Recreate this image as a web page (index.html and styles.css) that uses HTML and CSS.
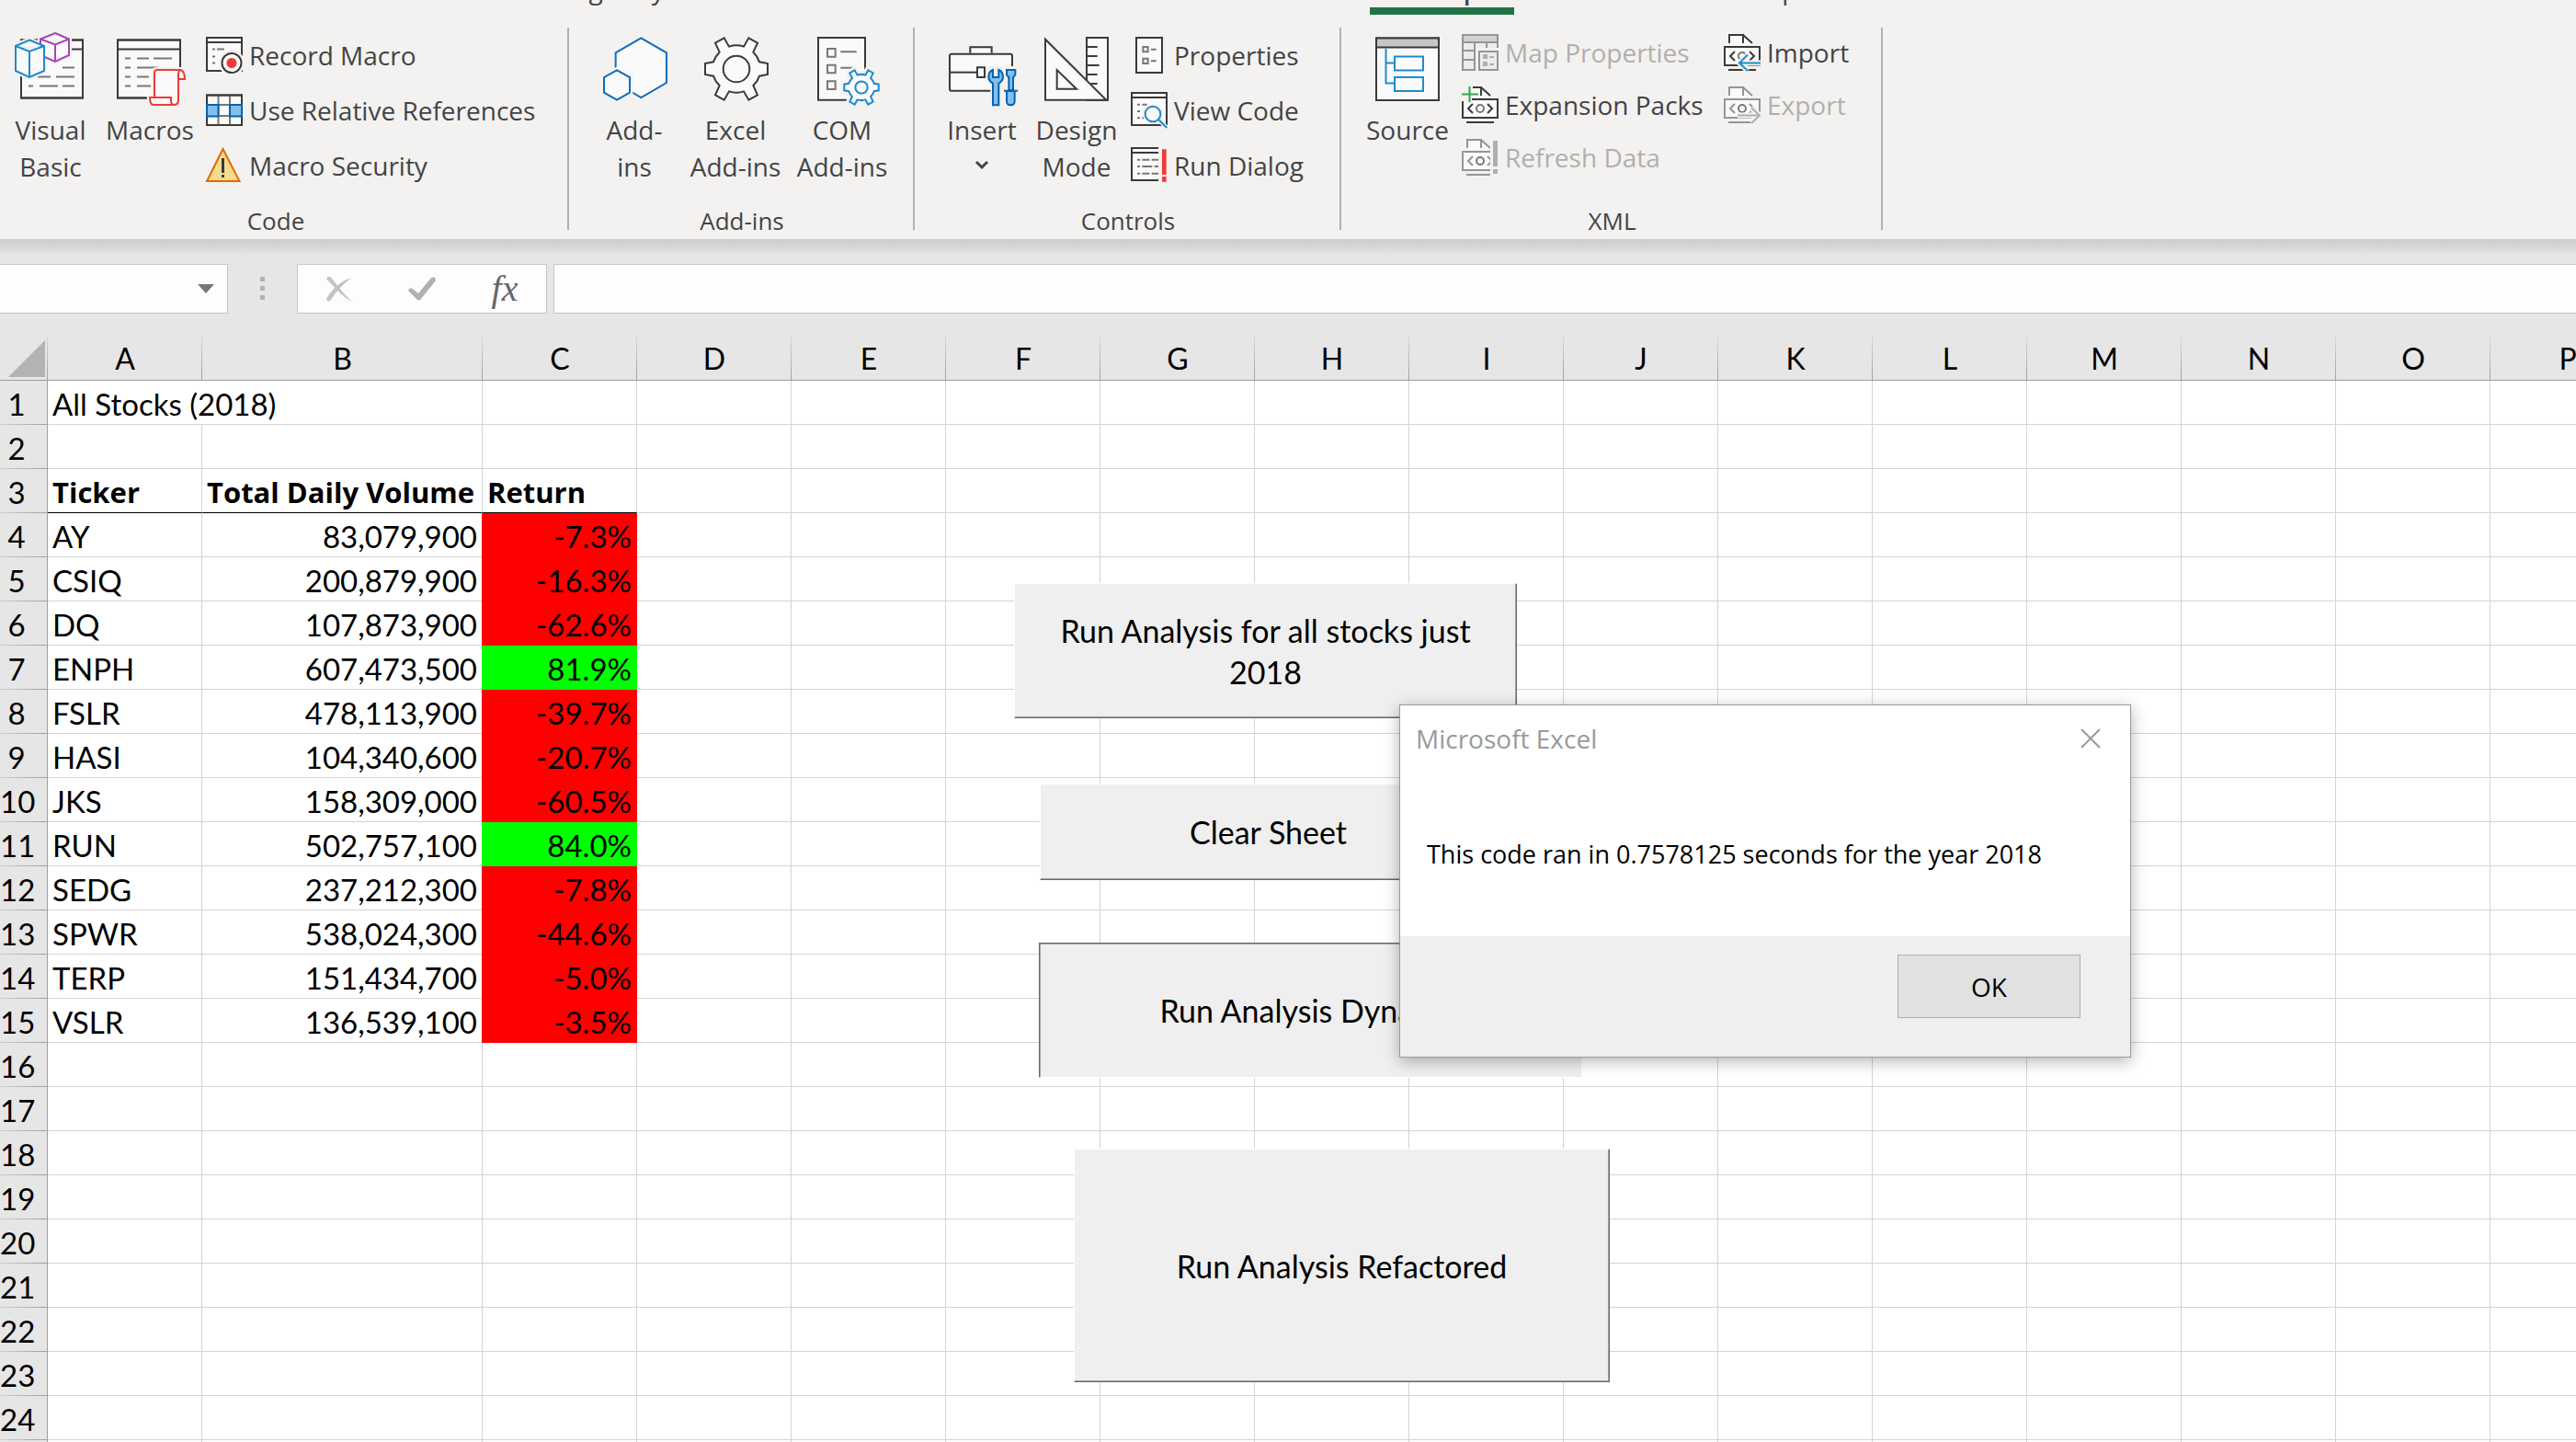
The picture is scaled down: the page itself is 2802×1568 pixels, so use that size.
FILE: index.html
```html
<!DOCTYPE html>
<html lang="en">
<head>
<meta charset="utf-8">
<title>Microsoft Excel</title>
<link rel="stylesheet" href="styles.css">
</head>
<body>
<svg class="defs" aria-hidden="true">
  <defs>
    <path id="gear" d="M-40-101-24-73A76 76 0 0 1 24-73L40-101 69-85 55-55A76 76 0 0 1 75-23L102-18V18L75 23A76 76 0 0 1 55 54L69 85 40 101 24 73A76 76 0 0 1-24 73L-40 101-69 85-55 54A76 76 0 0 1-75 23L-102 18V-18L-75-23A76 76 0 0 1-55-55L-69-85Z"/>
    <g id="xmldoc">
      <path class="paper" d="M6 12V1H20L31 12M1 14H39V34H1Z"/>
      <path d="M6 10V1H21V10M21 1 31 10M1 14H39V34H1ZM5 39H35M12 19 7 24 12 29M28 19 33 24 28 29"/>
      <ellipse cx="20" cy="24" rx="4" ry="4" class="mid"/>
    </g>
  </defs>
</svg>
<header class="ribbon">
  <nav class="tabs">
    <a href="#page-layout" class="tab">Page Layout</a>
    <a href="#developer" class="tab active">Developer</a>
    <a href="#help" class="tab">Help</a>
  </nav>
  <div class="groups">
    <section class="group code">
      <div class="tools">
        <button class="big w110">
          <svg viewBox="0 0 80 80"><path class="paper" d="M8 7.500H75V70.500H8Z"/><path d="M8 7.500H75V70.500H8ZM8 17.500H75"/><path class="mid" d="M53 37.500H66M26 47.500H40M46 47.500H66M16 57.500H21M28 57.500H48M53 57.500H66"/><path class="halo" d="M45 0 60 6.500V24L45 31 29 24V6.500ZM17 7.500 33 14V41L17 48 2 41V14Z"/><path class="paper purple" d="M45 0 60 6.500V24L45 31 29 24V6.500ZM29 6.500 45 12.500 60 6.500M45 12.500V31"/><path class="paper blue" d="M17 7.500 33 14V41L17 48 2 41V14ZM2 14 17 20 33 14M17 20V48"/></svg>
          <span>Visual<br>Basic</span>
        </button>
        <button class="big w106">
          <svg viewBox="0 0 80 80"><path class="paper" d="M5 7.500H73V70.500H5Z"/><path d="M73 36V7.500H5V70.500H36M5 17.500H73"/><path class="mid" d="M13 27.500H19M26 27.500H39M44 27.500H64M13 37.500H19M26 37.500H49M13 47.500H19M26 47.500H39M13 57.500H19M26 57.500H41"/><path class="halo" d="M45 70V42Q45 40 48 40H73Q78 41 78 50H71V73Q71 78 66 78H44Q40 78 40 70Z"/><path class="paper red" d="M45 70V43Q45 40 48 40H73Q78 41 78 50H71V73Q71 78 66 78H44Q40 78 40 70H63V74Q63 78 67 78M71 50V45Q71 40 74 40"/></svg>
          <span>Macros</span>
        </button>
        <div class="list gap8">
          <button class="small"><svg viewBox="0 0 40 40"><path class="paper" d="M1 1H39V37H1Z"/><path d="M39 18V1H1V37H15M1 6H39"/><path class="mid" d="M7 13.500H10M12 13.500H20M7 21.500H10M7 28.500H10"/><circle class="halo" cx="28" cy="28.500" r="11"/><circle class="paper" cx="28" cy="28.500" r="10.500"/><circle class="reddot" cx="28" cy="28.500" r="5.500"/></svg>Record Macro</button>
          <button class="small"><svg viewBox="0 0 40 40"><path class="paper" d="M1 3.500H39V36H1Z"/><path class="mid" d="M13.500 4V36M26 4V36M1 14H39M1 26H39"/><path d="M1 3.500H39V36H1Z"/><path class="cell" d="M1 14H13.500V26.500H1ZM26 14H39V26.500H26Z"/></svg>Use Relative References</button>
          <button class="small"><svg viewBox="0 0 40 40"><path class="warn" d="M18.500 2 36.500 37H1Z"/><path class="bang" d="M18.500 12V28M18.500 30V33"/></svg>Macro Security</button>
        </div>
      </div>
      <h2>Code</h2>
    </section>
    <section class="group addins">
      <div class="tools">
        <button class="big w104">
          <svg viewBox="150 108 240 240" class="x3"><path class="paper azure" d="M292 124 375 172V270L292 318 209 270V172Z"/><path class="halo" d="M213 229 255 252V302L213 326 171 302V252Z"/><path class="paper azure" d="M213 229 255 252V302L213 326 171 302V252Z"/></svg>
          <span>Add-<br>ins</span>
        </button>
        <button class="big w116">
          <svg viewBox="480 108 240 240" class="x3"><g transform="translate(603 225)"><use href="#gear" class="paper"/><circle r="43" class="paper"/></g></svg>
          <span>Excel<br>Add-ins</span>
        </button>
        <button class="big w116">
          <svg viewBox="828 108 240 240" class="x3"><path class="paper" d="M870 123H1023V326H870Z"/><path class="mid" d="M900 159H926V185H900ZM900 212H926V238H900ZM900 265H926V291H900ZM943 169H995M943 221H990"/><g transform="translate(1011 285) scale(.55)"><use href="#gear" class="halo wide"/><use href="#gear" class="paper blue thick"/><circle r="36" class="paper blue thick"/></g></svg>
          <span>COM<br>Add-ins</span>
        </button>
      </div>
      <h2>Add-ins</h2>
    </section>
    <section class="group controls">
      <div class="tools">
        <button class="big w100">
          <svg viewBox="114 108 240 240" class="x3"><path class="paper" d="M196 173V154H266V173"/><rect class="paper" x="129" y="176" width="204" height="120" rx="6"/><path d="M129 236H218"/><path class="paper" d="M219 220H243V252H219Z"/><path class="back" d="M258 216H354V345H262V280Q246 270 246 248 246 228 258 216Z"/><path class="tool" d="M270 343V272Q256 265 256 250 256 234 270 228V252H289V228Q303 234 303 250 303 265 289 272V343ZM315 228H343V244L336 252V294H322V252L315 244ZM315 297H341V330Q341 343 328 343 315 343 315 330ZM306 296H351"/></svg>
          <span>Insert</span>
          <svg class="chev" viewBox="0 0 16 12"><path d="M2 2 8 8 14 2"/></svg>
        </button>
        <button class="big w106">
          <svg viewBox="423 108 240 240" class="x3"><path class="paper" d="M576 123H645V326H576ZM576 153H611M576 183H611M576 213H617M576 243H611M590 273H611"/><path class="paper" d="M441 128V326H640ZM479 228V290H543Z"/></svg>
          <span>Design<br>Mode</span>
        </button>
        <div class="list gap6">
          <button class="small"><svg viewBox="720 117 120 120" class="x3"><path class="paper" d="M738 120H822V234H738Z"/><path class="mid" d="M760 150H776V166H760ZM760 188H776V204H760ZM786 158H803M786 196H803"/></svg>Properties</button>
          <button class="small"><svg viewBox="720 297 120 120" class="x3"><path class="paper" d="M723 300H837V405H723ZM723 315H837"/><path class="mid" d="M741 338H750M757 338H773M741 360H750M741 382H750M757 382H762"/><path class="halo slim" d="M811 388 838 414"/><circle class="halo slim" cx="792" cy="369" r="25"/><path class="blue" d="M811 388 838 414"/><circle class="paper blue" cx="792" cy="369" r="25"/></svg>View Code</button>
          <button class="small"><svg viewBox="720 477 120 120" class="x3"><path class="paper" d="M810 480H723V585H810M723 495H810"/><path class="mid" d="M741 518H750M757 518H781M788 518H810M741 540H750M757 540H790M797 540H810M741 563H750M757 563H781M788 563H810"/><path class="redfill" d="M822 484H836V567H822ZM822 573H836V590H822Z"/></svg>Run Dialog</button>
        </div>
      </div>
      <h2>Controls</h2>
    </section>
    <section class="group xml">
      <div class="tools">
        <button class="big w102">
          <svg viewBox="0 0 80 80"><path class="paper" d="M6 5.500H74V73H6Z"/><path class="bar" d="M6 5.500H74V15.500H6Z"/><path class="blue" d="M16.500 17V54.500H26M16.500 32.500H26M26 25.500H57V40.500H26ZM26 48H57V63H26Z"/></svg>
          <span>Source</span>
        </button>
        <div class="list tight gap8">
          <button class="small" disabled><svg viewBox="0 0 40 40"><path class="paper" d="M1 1H39V39H1Z"/><path class="bar" d="M1 1H39V9H1Z"/><path d="M14 9V39M27 9V18M1 18H39M1 28H18"/><path class="back" d="M15 15H41V41H15Z"/><path class="paper" d="M19 19H39V39H19Z"/><path class="bits" d="M23 22H28V27H23ZM30 24H35V26H30ZM23 30H28V35H23ZM30 32H35V34H30Z"/></svg>Map Properties</button>
          <button class="small"><svg viewBox="0 0 40 40"><use href="#xmldoc"/><path class="back" d="M-1-1H12V12H11V19H6V16H-1Z"/><path d="M1 16V22"/><path class="green" d="M0 8.500H18M8.500 0V17"/></svg>Expansion Packs</button>
          <button class="small" disabled><svg viewBox="0 0 40 40"><use href="#xmldoc"/><path class="back" d="M31-1H41V41H31Z"/><path class="bits" d="M34 2H39V30H34ZM34 33H39V38H34Z"/></svg>Refresh Data</button>
        </div>
        <div class="list tight">
          <button class="small"><svg viewBox="0 0 40 40"><use href="#xmldoc"/><path class="halo" d="M40 31.500H18M26 23 17 31.500 26 40"/><path class="blue" d="M40 31.500H17M26 22.500 17 31.500 26 40"/></svg>Import</button>
          <button class="small" disabled><svg viewBox="0 0 40 40"><use href="#xmldoc"/><path class="halo" d="M15 31.500H38M30 23 39 31.500 30 40"/><path class="faint" d="M15 31.500H38M30 23 39 31.500 30 40"/></svg>Export</button>
        </div>
      </div>
      <h2>XML</h2>
    </section>
  </div>
</header>
<div class="formula-bar">
  <div class="name-box"><input type="text" aria-label="Name box"><svg viewBox="0 0 18 10"><path d="M0 0H18L9 10Z"/></svg></div>
  <div class="dots"><i></i><i></i><i></i></div>
  <div class="fx-tools">
    <button aria-label="Cancel"><svg viewBox="0 0 30 28"><path class="cancel" d="M1 3Q4-2 8 4C14 12 20 20 29 28 19 23 11 14 1 3ZM29 2C20 8 13 15 6 26Q2 30 1 25C7 14 17 5 29 2Z"/></svg></button>
    <button aria-label="Enter"><svg viewBox="0 0 30 26"><path class="enter" d="M0 15Q2 10 6 14L11 18 25 1Q30-1 30 4L14 24Q11 27 9 24Z"/></svg></button>
    <button aria-label="Insert function" class="fx">fx</button>
  </div>
  <input type="text" class="formula" aria-label="Formula bar">
</div>
<main class="sheet">
  <table>
    <colgroup><col class="c-num"><col class="c-std"><col class="c-wide"><col span="14" class="c-std"></colgroup>
    <thead>
      <tr><th class="corner"><svg viewBox="0 0 40 40"><path d="M40 0V40H0Z"/></svg></th><th>A</th><th>B</th><th>C</th><th>D</th><th>E</th><th>F</th><th>G</th><th>H</th><th>I</th><th>J</th><th>K</th><th>L</th><th>M</th><th>N</th><th>O</th><th>P</th></tr>
    </thead>
    <tbody>
      <tr><th>1</th><td colspan="2">All Stocks (2018)</td><td></td><td class="rest" colspan="13"></td></tr>
      <tr><th>2</th><td></td><td></td><td></td><td class="rest" colspan="13"></td></tr>
      <tr class="titles"><th>3</th><td>Ticker</td><td>Total Daily Volume</td><td>Return</td><td class="rest" colspan="13"></td></tr>
      <tr><th>4</th><td>AY</td><td class="n">83,079,900</td><td class="n down">-7.3%</td><td class="rest" colspan="13"></td></tr>
      <tr><th>5</th><td>CSIQ</td><td class="n">200,879,900</td><td class="n down">-16.3%</td><td class="rest" colspan="13"></td></tr>
      <tr><th>6</th><td>DQ</td><td class="n">107,873,900</td><td class="n down">-62.6%</td><td class="rest" colspan="13"></td></tr>
      <tr><th>7</th><td>ENPH</td><td class="n">607,473,500</td><td class="n up">81.9%</td><td class="rest" colspan="13"></td></tr>
      <tr><th>8</th><td>FSLR</td><td class="n">478,113,900</td><td class="n down">-39.7%</td><td class="rest" colspan="13"></td></tr>
      <tr><th>9</th><td>HASI</td><td class="n">104,340,600</td><td class="n down">-20.7%</td><td class="rest" colspan="13"></td></tr>
      <tr><th>10</th><td>JKS</td><td class="n">158,309,000</td><td class="n down">-60.5%</td><td class="rest" colspan="13"></td></tr>
      <tr><th>11</th><td>RUN</td><td class="n">502,757,100</td><td class="n up">84.0%</td><td class="rest" colspan="13"></td></tr>
      <tr><th>12</th><td>SEDG</td><td class="n">237,212,300</td><td class="n down">-7.8%</td><td class="rest" colspan="13"></td></tr>
      <tr><th>13</th><td>SPWR</td><td class="n">538,024,300</td><td class="n down">-44.6%</td><td class="rest" colspan="13"></td></tr>
      <tr><th>14</th><td>TERP</td><td class="n">151,434,700</td><td class="n down">-5.0%</td><td class="rest" colspan="13"></td></tr>
      <tr><th>15</th><td>VSLR</td><td class="n">136,539,100</td><td class="n down">-3.5%</td><td class="rest" colspan="13"></td></tr>
      <tr><th>16</th><td></td><td></td><td></td><td class="rest" colspan="13"></td></tr>
      <tr><th>17</th><td></td><td></td><td></td><td class="rest" colspan="13"></td></tr>
      <tr><th>18</th><td></td><td></td><td></td><td class="rest" colspan="13"></td></tr>
      <tr><th>19</th><td></td><td></td><td></td><td class="rest" colspan="13"></td></tr>
      <tr><th>20</th><td></td><td></td><td></td><td class="rest" colspan="13"></td></tr>
      <tr><th>21</th><td></td><td></td><td></td><td class="rest" colspan="13"></td></tr>
      <tr><th>22</th><td></td><td></td><td></td><td class="rest" colspan="13"></td></tr>
      <tr><th>23</th><td></td><td></td><td></td><td class="rest" colspan="13"></td></tr>
      <tr><th>24</th><td></td><td></td><td></td><td class="rest" colspan="13"></td></tr>
      <tr><th></th><td></td><td></td><td></td><td class="rest" colspan="13"></td></tr>
    </tbody>
  </table>
  <button class="macro all-stocks">Run Analysis for all stocks just 2018</button>
  <button class="macro clear">Clear Sheet</button>
  <button class="macro dynamic">Run Analysis Dynamic</button>
  <button class="macro refactored">Run Analysis Refactored</button>
  <div class="dialog" role="dialog" aria-labelledby="dialog-title">
    <div class="dialog-title"><h1 id="dialog-title">Microsoft Excel</h1><button aria-label="Close"><svg viewBox="0 0 20 20"><path d="M0 0 20 20M20 0 0 20"/></svg></button></div>
    <p>This code ran in 0.7578125 seconds for the year 2018</p>
    <div class="dialog-actions"><button>OK</button></div>
  </div>
</main>
</body>
</html>
```
FILE: styles.css
```css
* { box-sizing: border-box; }
body {
  margin: 0;
  height: 100vh;
  display: flex;
  flex-direction: column;
  overflow: hidden;
  background: #e6e6e6;
  font: 28px/40px "Open Sans", sans-serif;
  color: #444;
}
button, input { font: inherit; color: inherit; margin: 0; padding: 0; border: 0; background: none; border-radius: 0; }
h1, h2, p { margin: 0; font-weight: 400; }
.defs { position: absolute; width: 0; height: 0; }

/* Ribbon */
.ribbon { flex: none; height: 260px; background: #f3f2f1; }
.tabs { height: 16px; display: flex; padding-left: 608px; overflow: hidden; }
.tab { height: 8px; display: flex; align-items: flex-end; color: #444; text-decoration: none; white-space: nowrap; }
.tab.active { height: 16px; width: 157px; margin: 0 248px 0 723px; justify-content: center; border-bottom: 8px solid #217346; font-weight: 600; }
.groups { display: flex; padding-top: 12px; }
.group { position: relative; height: 228px; display: flex; flex-direction: column; justify-content: space-between; }
.group::after { content: ""; position: absolute; right: 0; top: 2px; width: 2px; height: 220px; background: #b1b1b1; }
.group h2 { font-size: 26px; line-height: 32px; text-align: center; }
.code { width: 619px; padding-right: 19px; }
.addins { width: 376px; }
.controls { width: 464px; }
.xml { width: 589px; }
.tools { display: flex; }
.addins .tools { padding-left: 19px; }
.controls .tools { padding-left: 23px; }
.xml .tools { padding-left: 21px; }
.big { display: flex; flex-direction: column; align-items: center; padding-top: 8px; gap: 5px; white-space: nowrap; }
.big > svg { width: 80px; height: 80px; }
.big > .chev { width: 16px; height: 12px; margin-top: 8px; }
.w100 { width: 100px; }
.w102 { width: 102px; }
.w104 { width: 104px; }
.w106 { width: 106px; }
.w110 { width: 110px; }
.w116 { width: 116px; }
.list { display: flex; flex-direction: column; padding-top: 2px; }
.list.tight { padding-top: 0; }
.gap6 { margin-left: 6px; }
.gap8 { margin-left: 8px; }
.tight.gap8 { width: 285px; }
.small { height: 60px; display: flex; align-items: center; gap: 7px; white-space: nowrap; }
.tight .small { height: 57px; }
.small svg { width: 40px; height: 40px; flex: none; }

/* Icon strokes */
svg { fill: none; stroke: #3b3a39; stroke-width: 2; overflow: visible; }
.x3 { stroke-width: 6; }
.paper { fill: #fafafa; }
#xmldoc .paper { stroke: none; }
.mid { stroke: #797774; }
.halo { fill: #f3f2f1; stroke: #f3f2f1; stroke-width: 6; }
.x3 .halo { stroke-width: 20; }
.x3 .halo.slim { stroke-width: 14; }
.x3 .halo.wide { stroke-width: 44; }
.x3 .thick { stroke-width: 11; }
.back { fill: #f3f2f1; stroke: none; }
.blue { stroke: #1e8bcd; }
.azure { stroke: #0f6cbd; }
.purple { stroke: #a846b5; }
.red { stroke: #f03a37; }
.green { stroke: #2fa84f; }
.reddot, .redfill { fill: #f03a37; stroke: none; }
.cell { stroke: #0063b1; fill: #83beec; }
.tool { stroke: #0063b1; fill: #83beec; }
.warn { stroke: #e06c00; fill: #f8db8f; }
.bang { stroke-width: 3; }
.bar { fill: #c8c6c4; }
.bits { fill: #b1afad; stroke: none; }
.chev { stroke: #444; stroke-width: 3; }
.small:disabled { color: #b1afad; }
.small:disabled svg, .small:disabled .mid { stroke: #979593; }
.small:disabled .paper { fill: #ececec; }
.small:disabled .bar { fill: #d2d0ce; }
.small:disabled .faint { stroke: #b1afad; }

/* Formula bar */
.formula-bar {
  flex: none;
  height: 106px;
  display: flex;
  align-items: flex-start;
  padding-top: 27px;
  background: linear-gradient(#cdcdcd, #d2d2d2 5px, #e6e6e6 17px);
}
.name-box, .fx-tools, .formula { height: 54px; background: #fdfdfd; border: 1px solid #c6c6c6; }
.name-box { width: 248px; display: flex; align-items: center; border-left: 0; padding-right: 14px; }
.name-box input { flex: 1; min-width: 0; height: 100%; }
.name-box svg { width: 18px; height: 10px; fill: #777; stroke: none; }
.dots { width: 75px; padding-top: 14px; display: flex; flex-direction: column; align-items: center; gap: 5px; }
.dots i { width: 5px; height: 5px; background: #b1b1b1; }
.fx-tools { width: 272px; margin-right: 7px; display: flex; }
.fx-tools button { flex: 1; display: flex; align-items: center; justify-content: center; }
.fx-tools svg { width: 30px; height: 28px; stroke: none; }
.cancel { fill: #c3c3c3; }
.enter { fill: #b1b1b1; }
.fx-tools .fx { font: italic 40px/52px "Liberation Serif", serif; color: #666; }
.formula { flex: 1; min-width: 0; border-right: 0; }

/* Worksheet */
.sheet { position: relative; flex: 1; min-height: 0; overflow: hidden; background: #fff; color: #000; font-family: Lato, sans-serif; }
table { table-layout: fixed; border-spacing: 0; width: 2877px; font-size: 33px; line-height: 44px; }
.c-num { width: 52px; }
.c-std { width: 168px; }
.c-wide { width: 305px; }
th { font-weight: 400; padding: 0; height: 48px; }
thead th {
  padding-top: 1px;
  font-size: 32px;
  border-bottom: 1px solid #9e9e9e;
  background: linear-gradient(#d8d8d8, #9e9e9e) right / 1px 100% no-repeat #e6e6e6;
}
.corner svg { display: block; width: 40px; height: 40px; margin-left: 9px; fill: #b3b3b3; stroke: none; }
tbody th {
  padding: 2px 15px 0 0;
  border-right: 1px solid #9e9e9e;
  background: linear-gradient(90deg, #cfcfcf, #9e9e9e) bottom / 100% 1px no-repeat #e6e6e6;
}
td { padding: 2px 5px 0; height: 48px; border-right: 1px solid #d4d4d4; border-bottom: 1px solid #d4d4d4; white-space: nowrap; }
.n { text-align: right; }
.rest { border-right: 0; background: repeating-linear-gradient(90deg, transparent 0 167px, #d4d4d4 167px 168px); }
.titles td { font: 700 31px/44px "Open Sans", sans-serif; }
.titles td:not(.rest) { border-bottom-color: #000; }
.down { background: #f00; border-color: #f00; box-shadow: -1px 0 #f00; }
.up { background: #0f0; border-color: #0f0; box-shadow: -1px 0 #0f0; }

/* Macro buttons floating on the sheet */
.macro {
  position: absolute;
  padding: 0 40px;
  font-size: 34px;
  line-height: 45px;
  color: #000;
  background: #efefef;
  border: 1px solid #696969;
  border-top-color: #fff;
  border-left-color: #fff;
  box-shadow: inset -1px -1px #a0a0a0;
}
.all-stocks { left: 1103px; top: 268px; width: 547px; height: 147px; }
.clear { left: 1131px; top: 486px; width: 497px; height: 105px; }
.dynamic { left: 1130px; top: 659px; width: 591px; height: 147px; border-color: #696969 #fff #fff #696969; box-shadow: inset 1px 1px #a0a0a0; }
.refactored { left: 1168px; top: 883px; width: 583px; height: 254px; }

/* Message box */
.dialog {
  position: absolute;
  left: 1522px;
  top: 400px;
  width: 796px;
  background: #fff;
  border: 1px solid #9a9a9a;
  box-shadow: 0 4px 16px rgba(0, 0, 0, .3);
  font: 28px/40px "Open Sans", sans-serif;
}
.dialog-title { height: 71px; padding: 0 33px 0 17px; display: flex; align-items: center; justify-content: space-between; color: #999; }
.dialog-title h1 { font-size: 28px; }
.dialog-title svg { display: block; width: 20px; height: 20px; stroke: #999; }
.dialog p { padding: 71px 29px 69px; font-size: 27px; white-space: nowrap; }
.dialog-actions { height: 131px; padding: 20px 54px; display: flex; justify-content: flex-end; align-items: flex-start; background: #efefef; }
.dialog-actions button { width: 199px; height: 69px; background: #e1e1e1; border: 1px solid #adadad; }
```
